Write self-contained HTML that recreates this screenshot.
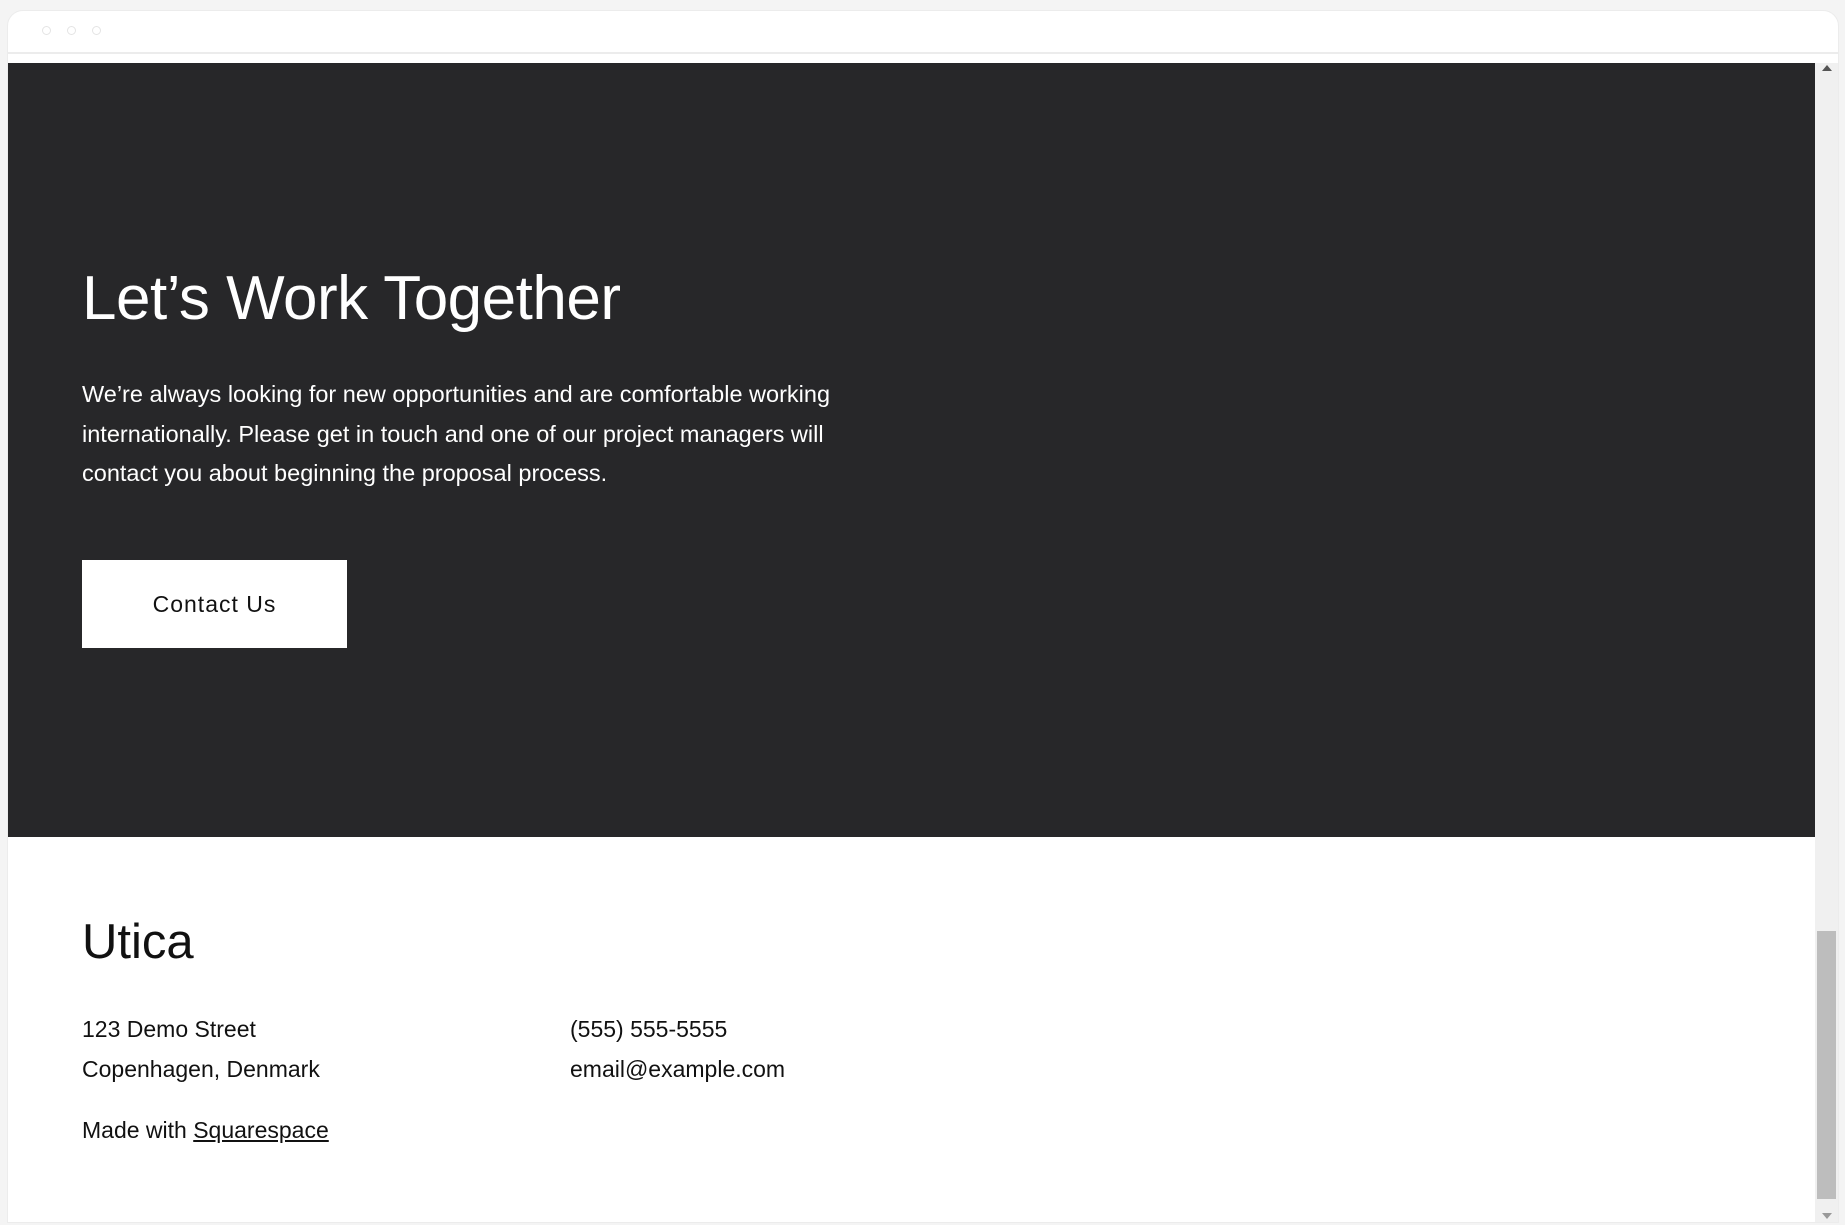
<!DOCTYPE html>
<html><head><meta charset="utf-8"><style>
*{margin:0;padding:0;box-sizing:border-box}
body{width:1845px;height:1225px;background:#f4f4f4;font-family:"Liberation Sans",sans-serif;position:relative;overflow:hidden}
.win{position:absolute;left:7px;top:10px;width:1832px;height:1213px;background:#fff;border-radius:16px 16px 0 0;border:1px solid #ececec;overflow:hidden}
.dot{position:absolute;top:15px;width:9px;height:9px;border:1.5px solid #e4e4e4;border-radius:50%}
.bar{position:absolute;left:0;top:41px;width:100%;height:2px;background:#ececec}
.dark{position:absolute;left:0;top:52px;width:1807px;height:774px;background:#272729;color:#fff}
h1{position:absolute;left:74px;top:200px;font-size:62px;font-weight:400;letter-spacing:-0.5px}
p.lead{position:absolute;left:74px;top:312px;width:820px;font-size:23.5px;line-height:39.5px}
.btn{position:absolute;left:74px;top:497px;width:265px;height:88px;background:#fff;color:#111;font-size:23px;letter-spacing:1px;display:flex;align-items:center;justify-content:center}
.foot{position:absolute;left:74px;color:#111}
.sb{position:absolute;left:1807px;top:52px;width:25px;height:1161px;background:#f0f0f0}
.thumb{position:absolute;left:2px;top:868px;width:19px;height:268px;background:#bdbdbd}
</style></head><body>
<div class="win">
<div class="dot" style="left:34px"></div><div class="dot" style="left:59px"></div><div class="dot" style="left:84px"></div>
<div class="bar"></div>
<div class="dark">
<h1>Let’s Work Together</h1>
<p class="lead">We’re always looking for new opportunities and are comfortable working internationally. Please get in touch and one of our project managers will contact you about beginning the proposal process.</p>
<div class="btn">Contact Us</div>
</div>
<div class="foot" style="top:903px;font-size:49px">Utica</div>
<div class="foot" style="top:999px;font-size:23px;line-height:39.5px">123 Demo Street<br>Copenhagen, Denmark</div>
<div class="foot" style="left:562px;top:999px;font-size:23px;line-height:39.5px">(555) 555-5555<br>email@example.com</div>
<div class="foot" style="top:1106px;font-size:23px">Made with <span style="text-decoration:underline">Squarespace</span></div>
<div class="sb"><div style="position:absolute;left:7px;top:2px;border:5px solid transparent;border-bottom:6px solid #555;border-top:0"></div><div class="thumb"></div><div style="position:absolute;left:7px;top:1150px;border:5px solid transparent;border-top:6px solid #999;border-bottom:0"></div></div>
</div>
</body></html>
